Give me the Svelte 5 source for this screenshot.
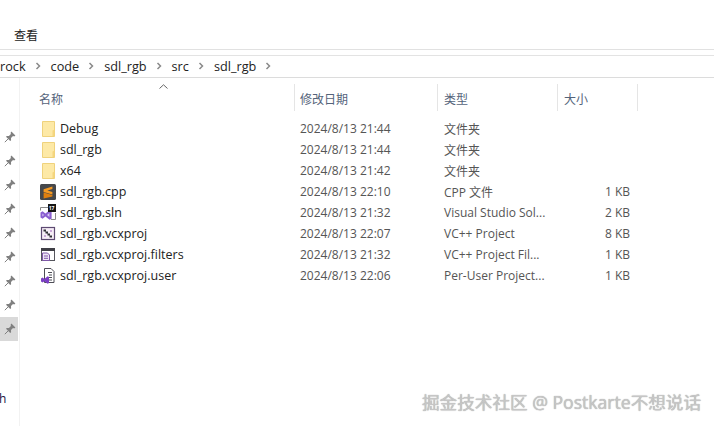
<script>
	const crumbs = ['rock', 'code', 'sdl_rgb', 'src', 'sdl_rgb'];
	const files = [
		{ name: 'Debug', date: '2024/8/13 21:44', type: '文件夹', size: '', icon: 'folder' },
		{ name: 'sdl_rgb', date: '2024/8/13 21:44', type: '文件夹', size: '', icon: 'folder' },
		{ name: 'x64', date: '2024/8/13 21:42', type: '文件夹', size: '', icon: 'folder' },
		{ name: 'sdl_rgb.cpp', date: '2024/8/13 22:10', type: 'CPP 文件', size: '1 KB', icon: 'cpp' },
		{ name: 'sdl_rgb.sln', date: '2024/8/13 21:32', type: 'Visual Studio Sol...', size: '2 KB', icon: 'sln' },
		{ name: 'sdl_rgb.vcxproj', date: '2024/8/13 22:07', type: 'VC++ Project', size: '8 KB', icon: 'proj' },
		{ name: 'sdl_rgb.vcxproj.filters', date: '2024/8/13 21:32', type: 'VC++ Project Fil...', size: '1 KB', icon: 'filters' },
		{ name: 'sdl_rgb.vcxproj.user', date: '2024/8/13 22:06', type: 'Per-User Project...', size: '1 KB', icon: 'user' }
	];
	const pins = [0, 1, 2, 3, 4, 5, 6, 7, 8];
</script>

<div class="window">
	<div class="toolbar"><span class="view">查看</span></div>
	<div class="address">
		{#each crumbs as crumb}
			<span class="crumb">{crumb}</span>
			<svg class="chev" viewBox="0 0 6 8"><path d="M1.5 1L4.5 4L1.5 7" /></svg>
		{/each}
	</div>
	<div class="body">
		<aside class="side">
			<div class="pins">
				{#each pins as p}
					<div class="pin" class:active={p === 8}>
						<svg viewBox="0 0 12 12">
							<path d="M7.4 0.6L11.4 4.6L10.2 5.4L9 5.1L7 7.1L7.1 9.2L6.2 10L2 5.8L2.8 4.9L4.9 5L6.9 3L6.6 1.8Z" />
							<path class="needle" d="M4.2 7.8L0.8 11.2" />
						</svg>
					</div>
				{/each}
			</div>
			<span class="cut">h</span>
		</aside>
		<main class="list">
			<div class="head">
				<div class="col name">名称</div>
				<div class="col date">修改日期</div>
				<div class="col type">类型</div>
				<div class="col size">大小</div>
				<div class="col end"></div>
				<svg class="sort" viewBox="0 0 9 5"><path d="M0.5 4.5L4.5 0.8L8.5 4.5" /></svg>
			</div>
			<div class="rows">
				{#each files as f}
					<div class="row">
						<div class="cell name">
							<svg class="icon" viewBox="0 0 16 16">
								{#if f.icon === 'folder'}
									<path d="M2.5 0.5H14.5V15.5H2.5Z" fill="#fde9a6" stroke="#efd27c" />
									<path d="M12.5 15V9.5L14.5 8.5V15Z" fill="#f5d67e" />
								{:else if f.icon === 'cpp'}
									<rect x="0" y="0" width="16" height="16" rx="1.5" fill="#46484b" />
									<path d="M12.4 2.6L3.6 5.2V8L12.4 10.6V7.9L7.4 6.5L12.4 5.1Z" fill="#f59a23" />
									<path d="M3.6 8.6L12.4 11V12.4L3.6 14.6Z" fill="#e0800f" />
								{:else if f.icon === 'sln'}
									<path d="M0.5 5.5V2.5H8" fill="none" stroke="#8a8a8a" />
									<path d="M15.5 8V14.5H11" fill="none" stroke="#8a8a8a" />
									<path d="M0.5 7.5L2.6 6.2L5.4 8.6L9.6 5.2L11.6 6.2V13.8L9.6 14.8L5.4 11.4L2.6 13.8L0.5 12.5Z" fill="#8a5fd0" />
									<path d="M2.4 8.6L4 10L2.4 11.4ZM9.4 8L7 10L9.4 12Z" fill="#d9c9f2" />
									<rect x="8" y="-1" width="8" height="8" fill="#151515" />
									<text x="8.7" y="5.3" class="ver">17</text>
								{:else if f.icon === 'proj'}
									<rect x="1.5" y="1.5" width="13" height="12" fill="#f7eef7" stroke="#5d4a72" stroke-width="1.2" />
									<path d="M3.5 3.5H6V5.5H8V7.5H10V9.5H12V11.5H9.5V9.5H7.5V7.5H5.5V5.5H3.5Z" fill="#2f2f35" />
									<path d="M10 4H12V6H10ZM4 9H6V11H4Z" fill="#c9a8d8" />
								{:else if f.icon === 'filters'}
									<rect x="1.5" y="1.5" width="13" height="12" fill="#fff" stroke="#55555c" />
									<rect x="1" y="1" width="14" height="3" fill="#3f3f46" />
									<path d="M2.5 6H7.5L9.5 8V13.5H2.5Z" fill="#efe6f6" stroke="#7e57a8" />
									<path d="M4 9H8M4 11.3H8" stroke="#7e57a8" />
								{:else}
									<path d="M4.5 0.5H11L14 3.5V14.5H4.5Z" fill="#fff" stroke="#4d4d56" />
									<path d="M8 4.5H12M9 7H12M9 9.5H12M9 12H12" stroke="#4d4d56" />
									<path d="M1 10.5L2.6 9.5L4.4 11L7.6 8.2L9 9V15L7.6 15.8L4.4 13.2L2.6 14.6L1 13.6Z" fill="#7b3fc4" />
								{/if}
							</svg>
							<span>{f.name}</span>
						</div>
						<div class="cell date">{f.date}</div>
						<div class="cell type">{f.type}</div>
						<div class="cell size">{f.size}</div>
					</div>
				{/each}
			</div>
		</main>
	</div>
	<div class="mark">掘金技术社区 @ Postkarte不想说话</div>
</div>

<style>
	:global(body) {
		background: #fff;
	}
	.window {
		position: relative;
		width: 714px;
		height: 426px;
		overflow: hidden;
		background: #fff;
		color: #2b2b2b;
		font-family: 'Open Sans', 'Noto Sans CJK SC', sans-serif;
		font-size: 12px;
	}
	.toolbar {
		height: 50px;
		box-sizing: border-box;
		padding: 28px 0 0 14px;
		border-bottom: 1px solid #e1e1e1;
		line-height: 16px;
	}
	.view {
		color: #222;
	}
	.address {
		margin-top: 5px;
		height: 23px;
		box-sizing: border-box;
		padding-bottom: 2px;
		border-top: 1px solid #e3e3e3;
		border-bottom: 1px solid #dcdcdc;
		display: flex;
		align-items: center;
		font-size: 12.7px;
		color: #222;
	}
	.chev {
		width: 6px;
		height: 8px;
		margin: 0 10px 0 9px;
		flex: none;
	}
	.chev path {
		fill: none;
		stroke: #8a8a8a;
		stroke-width: 1.5;
	}
	.body {
		display: flex;
		height: 348px;
	}
	.side {
		position: relative;
		width: 20px;
		box-sizing: border-box;
		border-right: 1px solid #f2f2f2;
		flex: none;
	}
	.pins {
		padding-top: 47px;
	}
	.pin {
		width: 18px;
		height: 24px;
		display: flex;
		align-items: center;
		justify-content: center;
		box-sizing: border-box;
		padding-left: 2px;
	}
	.pin.active {
		background: #d9d9d9;
	}
	.pin svg {
		width: 12px;
		height: 12px;
	}
	.pin path {
		fill: #808080;
	}
	.pin .needle {
		fill: none;
		stroke: #808080;
	}
	.cut {
		position: absolute;
		left: -1px;
		top: 312px;
		font-size: 12px;
		color: #1b1340;
	}
	.list {
		flex: 1;
	}
	.head {
		position: relative;
		display: flex;
		margin-top: 6px;
		height: 27px;
		color: #54637a;
		line-height: 32px;
	}
	.sort {
		position: absolute;
		left: 139px;
		top: 0;
		width: 9px;
		height: 5px;
	}
	.sort path {
		fill: none;
		stroke: #666;
	}
	.col.name,
	.cell.name {
		width: 274px;
	}
	.col.date,
	.cell.date {
		width: 143px;
	}
	.col.type,
	.cell.type {
		width: 120px;
	}
	.col.size,
	.cell.size {
		width: 80px;
	}
	.col {
		box-sizing: border-box;
		border-left: 1px solid #e5e5e5;
		padding-left: 6px;
	}
	.col.date {
		padding-left: 5px;
	}
	.col.name {
		border-left: 0;
		padding-left: 19px;
	}
	.rows {
		margin-top: 7px;
	}
	.row {
		display: flex;
		height: 21px;
		align-items: center;
	}
	.cell {
		box-sizing: border-box;
		padding-left: 6px;
		white-space: nowrap;
		color: #555;
	}
	.cell.name {
		display: flex;
		align-items: center;
		gap: 4px;
		padding-left: 20px;
		color: #222;
		font-size: 12.5px;
	}
	.cell.type {
		padding-left: 7px;
	}
	.cell.size {
		text-align: right;
		padding-right: 7px;
	}
	.icon {
		width: 16px;
		height: 16px;
		flex: none;
		overflow: visible;
	}
	.ver {
		font-size: 5px;
		font-weight: 700;
		fill: #fff;
	}
	.mark {
		position: absolute;
		left: 422px;
		top: 390px;
		font-size: 17.6px;
		line-height: 24px;
		white-space: nowrap;
		color: #c6c6c6;
		text-shadow: 0 0 1px #999;
	}
</style>
